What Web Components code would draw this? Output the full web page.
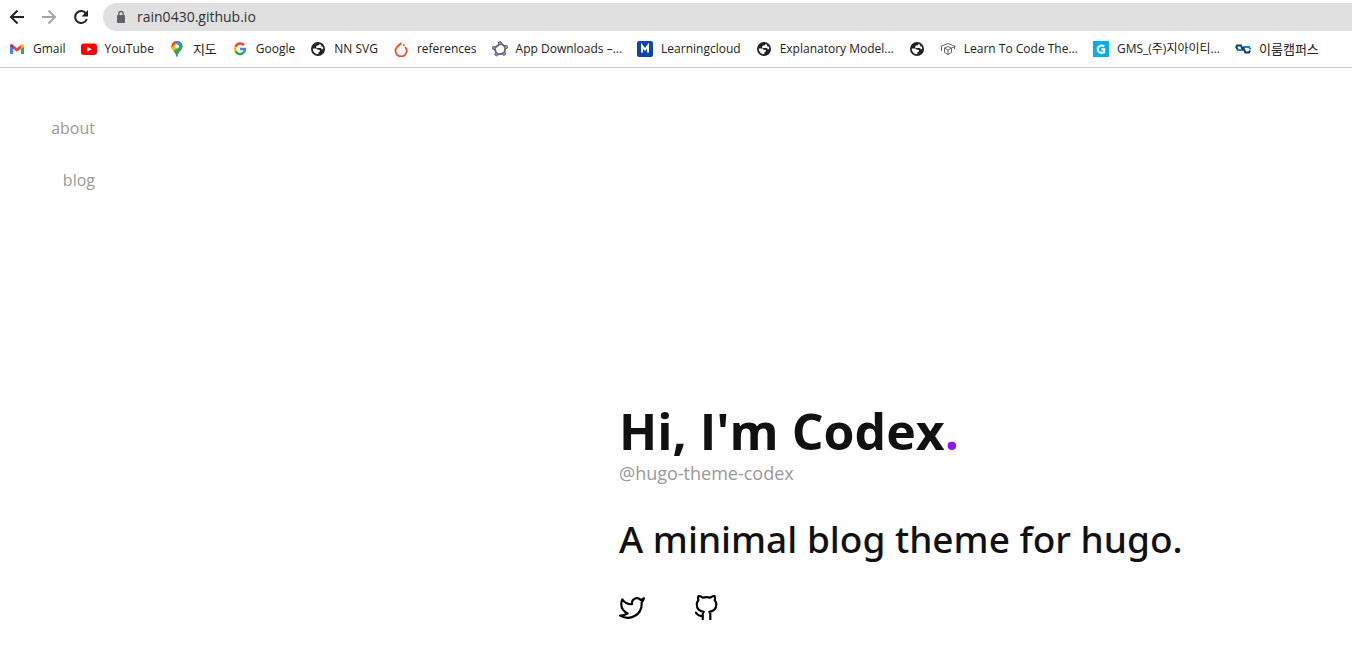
<!DOCTYPE html>
<html lang="en">
<head>
<meta charset="utf-8">
<meta name="viewport" content="width=device-width, initial-scale=1">
<title>Codex</title>
<style>
body { margin: 0; background: #fff; color: #111; font-family: "Open Sans", "Noto Sans CJK KR", sans-serif; }
</style>
</head>
<body>
<app-window></app-window>

<template id="window-tpl">
<style>
:host { display: flex; flex-direction: column; min-height: 100vh; }
home-page { flex: 1; }
</style>
<browser-toolbar></browser-toolbar>
<bookmark-bar>
  <bookmark-item icon="gmail">Gmail</bookmark-item>
  <bookmark-item icon="youtube">YouTube</bookmark-item>
  <bookmark-item icon="maps" lang="ko">지도</bookmark-item>
  <bookmark-item icon="google">Google</bookmark-item>
  <bookmark-item icon="globe">NN SVG</bookmark-item>
  <bookmark-item icon="torch">references</bookmark-item>
  <bookmark-item icon="geogebra">App Downloads –...</bookmark-item>
  <bookmark-item icon="learning">Learningcloud</bookmark-item>
  <bookmark-item icon="globe">Explanatory Model...</bookmark-item>
  <bookmark-item icon="globe" bare></bookmark-item>
  <bookmark-item icon="cap">Learn To Code The...</bookmark-item>
  <bookmark-item icon="gms">GMS_(주)지아이티...</bookmark-item>
  <bookmark-item icon="campus" lang="ko">이룸캠퍼스</bookmark-item>
</bookmark-bar>
<home-page></home-page>
</template>

<template id="toolbar-tpl">
<style>
:host { display: flex; align-items: center; gap: 16px; height: 28px; padding: 3px 0 0 9px; }
button { display: flex; padding: 0; border: 0; background: none; width: 16px; height: 16px; color: #202124; }
button:disabled { color: #a5a6a8; }
label { display: flex; align-items: center; gap: 8px; flex: 1; height: 28px; margin-left: -2px; padding-left: 10px; border-radius: 14px 0 0 14px; background: #e0e0e0; }
input { flex: 1; min-width: 0; padding: 0; border: 0; outline: 0; background: none; color: #303134; font: 14px/20px "Open Sans", sans-serif; }
</style>
<button aria-label="Back"><svg width="16" height="16" viewBox="0 0 16 16" fill="none" stroke="currentColor" stroke-width="2"><path d="M15 8H2.500M8.500 1.500 2 8l6.500 6.500"/></svg></button>
<button aria-label="Forward" disabled><svg width="16" height="16" viewBox="0 0 16 16" fill="none" stroke="currentColor" stroke-width="2"><path d="M1 8h12.500M7.500 1.500 14 8l-6.500 6.500"/></svg></button>
<button aria-label="Reload"><svg width="16" height="16" viewBox="0 0 16 16"><path d="M13 4.500A6 6 0 1 0 13.800 10" fill="none" stroke="currentColor" stroke-width="2"/><path d="M15 1v6.500H8.500z" fill="currentColor"/></svg></button>
<label>
  <svg width="16" height="16" viewBox="0 0 16 16" aria-hidden="true"><rect x="4" y="6" width="8" height="8" rx="1" fill="#5f6368"/><path d="M5.800 6.500V4.700a2.200 2.200 0 0 1 4.400 0v1.800" fill="none" stroke="#5f6368" stroke-width="1.300"/></svg>
  <input type="text" value="rain0430.github.io" aria-label="Address" spellcheck="false">
</label>
</template>

<template id="bar-tpl">
<style>
:host { display: flex; align-items: center; gap: 15px; height: 36px; padding-left: 9px; border-bottom: 1px solid #ccc; overflow: hidden; }
</style>
<slot></slot>
</template>

<template id="item-tpl">
<style>
:host { display: block; flex: none; }
a { display: flex; align-items: center; gap: 8px; color: #222; text-decoration: none; font-size: 12px; line-height: 16px; white-space: nowrap; }
:host([lang="ko"]) a { font-size: 13px; }
:host([bare]) span { display: none; }
svg { display: block; flex: none; }
</style>
<a href="#"><svg width="16" height="16" viewBox="0 0 16 16" aria-hidden="true"></svg><span><slot></slot></span></a>
</template>

<template id="home-tpl">
<style>
:host { display: grid; grid-template-columns: 95px 524fr 733fr; }
nav { display: flex; flex-direction: column; align-items: flex-end; gap: 28px; padding-top: 48px; }
nav a { color: #999; text-decoration: none; font-size: 16px; line-height: 24px; }
main { grid-column: 3; align-self: end; padding-bottom: 45px; }
h1 { margin: 0; font-size: 50px; line-height: 60px; font-weight: 700; white-space: nowrap; }
h1 span { color: #8f10ff; }
p { margin: 0; color: #999; font-size: 18px; line-height: 24px; }
h2 { margin: 28px 0 30px; font-family: "Noto Sans", sans-serif; font-size: 37px; line-height: 52px; font-weight: 500; white-space: nowrap; }
.social { display: flex; gap: 48px; }
.social a { display: flex; color: #000; }
</style>
<nav aria-label="Main"><a href="#about">about</a><a href="#blog">blog</a></nav>
<main>
  <h1>Hi, I'm Codex<span>.</span></h1>
  <p>@hugo-theme-codex</p>
  <h2>A minimal blog theme for hugo.</h2>
  <div class="social">
    <a href="#twitter" aria-label="Twitter"><svg width="26" height="26" viewBox="0 0 24 24" fill="none" stroke="currentColor" stroke-width="2" stroke-linecap="round" stroke-linejoin="round"><path d="M23 3a10.900 10.900 0 0 1-3.140 1.530 4.480 4.480 0 0 0-7.860 3v1A10.660 10.660 0 0 1 3 4s-4 9 5 13a11.640 11.640 0 0 1-7 2c9 5 20 0 20-11.500a4.500 4.500 0 0 0-.08-.83A7.720 7.720 0 0 0 23 3z"/></svg></a>
    <a href="#github" aria-label="GitHub"><svg width="26" height="26" viewBox="0 0 24 24" fill="none" stroke="currentColor" stroke-width="2" stroke-linejoin="round"><path d="M9 19c-5 1.500-5-2.500-7-3m14 7v-4.870a3.370 3.370 0 0 0-.94-2.610c3.140-.35 6.440-1.540 6.440-7A5.440 5.440 0 0 0 20 4.770 5.070 5.070 0 0 0 19.910 1S18.730.65 16 2.480a13.380 13.380 0 0 0-7 0C6.270.65 5.090 1 5.090 1A5.070 5.070 0 0 0 5 4.770a5.440 5.440 0 0 0-1.500 3.780c0 5.420 3.300 6.610 6.440 7A3.370 3.370 0 0 0 9 18.130V23"/></svg></a>
  </div>
</main>
</template>

<script>
const icons = {
  gmail: '<path d="M1 4v9h3V7z" fill="#4285f4"/><path d="M12 7v6h3V4z" fill="#34a853"/><path d="M1 4.500 4 7.500V4L2.500 3Q1 3 1 4.500" fill="#c5221f"/><path d="M4 4l4 3 4-3v3.800l-4 3-4-3z" fill="#ea4335"/><path d="M12 4l1.500-1Q15 3 15 4.500V6l-3 2z" fill="#fbbc04"/>',
  youtube: '<rect y="2.500" width="16" height="11.500" rx="3" fill="#f00"/><path d="M6.300 5.700v5l4.500-2.500z" fill="#fff"/>',
  maps: '<clipPath id="p"><path d="M8 0a5.500 5.500 0 0 1 5.500 5.500C13.500 9 9.500 10.500 8.500 15.500q-.5 1-1 0C6.500 10.500 2.500 9 2.500 5.500A5.500 5.500 0 0 1 8 0"/></clipPath><g clip-path="url(#p)"><path d="M0 0h16v16H0z" fill="#34a853"/><path d="M0 11 14 -2H0z" fill="#ea4335"/><path d="M5 -1h11v3L9 8z" fill="#4285f4"/><path d="M1 8 7 2l3 4-6 6z" fill="#fbbc04"/><path d="M14 1v5L7 16l-3-5z" fill="#34a853"/><path d="M5 0h9v3l-4 2z" fill="#4285f4"/></g><circle cx="8" cy="5.500" r="2" fill="#fff"/>',
  google: '<g fill="none" stroke-width="2.500"><path d="M12 4.200A5 5 0 0 0 3.600 5.700" stroke="#ea4335"/><path d="M3.600 5.700a5 5 0 0 0 0 4.600" stroke="#fbbc05"/><path d="M3.600 10.300a5 5 0 0 0 7.700 1.500" stroke="#34a853"/><path d="M11.300 11.800A5 5 0 0 0 12.900 8H8" stroke="#4285f4"/></g>',
  globe: '<circle cx="8" cy="8" r="7" fill="#202124"/><path d="M2.700 7.500H6q1.500 0 1.500 1.200h1.300q1.200 0 1.200 1.200T8.500 11v1.800q-1 .6-2 .2Q3 11.800 2.700 7.500M9.500 2.700v.8Q9 4.500 7.500 4.500T6 6q0 1 1.500 1h3q1 0 1 1.300H13q.4-1-.2-2.800h-1.600V4.200Q10.500 3 9.500 2.700" fill="#fff"/>',
  torch: '<path d="M8.300 2 4 6a5.600 5.600 0 1 0 8.200 0" fill="none" stroke="#ee4c2c" stroke-width="1.800"/><circle cx="10.800" cy="4" r="1" fill="#ee4c2c"/>',
  geogebra: '<path d="M8.500 2.200 13.500 6l-1.200 6.500-7.500 1L2.500 7.200z" fill="none" stroke="#666" stroke-width="1.800"/><g fill="#88e" stroke="#555" stroke-width=".7"><circle cx="8" cy="2.300" r="1.700"/><circle cx="14" cy="6" r="1.700"/><circle cx="12" cy="12.700" r="1.700"/><circle cx="4.500" cy="13.300" r="1.700"/><circle cx="2" cy="7" r="1.700"/></g>',
  learning: '<rect width="16" height="16" rx="2" fill="#0a47b5"/><path d="M5 11.500V4.700l3 4 3-4v6.800" fill="none" stroke="#fff" stroke-width="2"/>',
  cap: '<g fill="none" stroke="#666"><path d="M.5 5.500 8 2.500l7.500 3-3.500 1.300M1.500 6v4M4.500 7v4.500L8 13.500l3.500-2V7L8 5.500zL8 9l3.500-2M8 9v4.500M14.500 6v2"/></g>',
  gms: '<path d="M0 0h16v16H0z" fill="#06aeef"/><path d="M11.300 5.300Q8.500 3.800 6.300 5.300T5 9.500q1.200 3.500 6.200 1.800V8.300H8.300" fill="none" stroke="#fff" stroke-width="2"/>',
  campus: '<g fill="none" stroke-width="2"><path d="M8 9.500 6 4.500H2L1.300 6 3 9" stroke="#0b3b70"/><path d="M2 9h5.500" stroke="#1484c4"/><path d="M8.500 6H14l1 1.500v1" stroke="#1484c4"/><path d="M8 6l2.300 5.500H14l1-2" stroke="#0b3b70"/></g>'
};

class TemplateElement extends HTMLElement {
  constructor() {
    super();
    const tpl = document.getElementById(this.constructor.template);
    this.attachShadow({ mode: 'open' }).append(tpl.content.cloneNode(true));
  }
}
class BrowserToolbar extends TemplateElement { static template = 'toolbar-tpl'; }
class BookmarkBar extends TemplateElement { static template = 'bar-tpl'; }
class BookmarkItem extends TemplateElement {
  static template = 'item-tpl';
  connectedCallback() {
    this.shadowRoot.querySelector('svg').innerHTML = icons[this.getAttribute('icon')] || '';
    if (this.hasAttribute('bare')) this.shadowRoot.querySelector('a').setAttribute('aria-label', 'Bookmark');
  }
}
class HomePage extends TemplateElement { static template = 'home-tpl'; }
class AppWindow extends TemplateElement { static template = 'window-tpl'; }
customElements.define('browser-toolbar', BrowserToolbar);
customElements.define('bookmark-bar', BookmarkBar);
customElements.define('bookmark-item', BookmarkItem);
customElements.define('home-page', HomePage);
customElements.define('app-window', AppWindow);
</script>
</body>
</html>
